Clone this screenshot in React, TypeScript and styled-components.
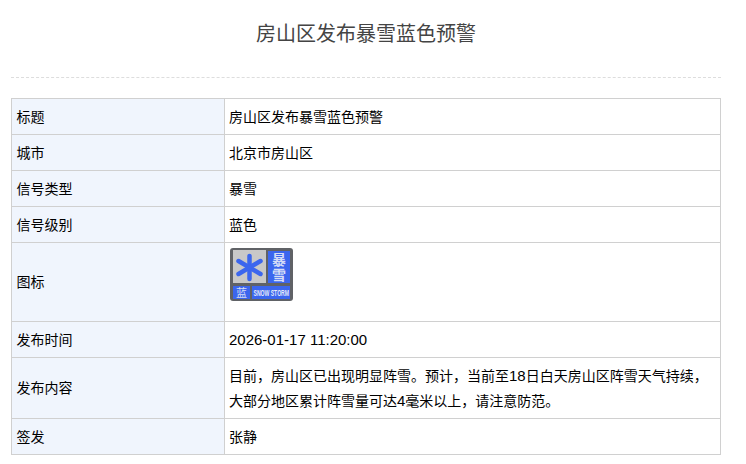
import type { ReactNode } from 'react';
import styled, { createGlobalStyle } from 'styled-components';

const GlobalStyle = createGlobalStyle`
  html, body {
    margin: 0;
    padding: 0;
    background: #fff;
  }
`;

const Page = styled.div`
  width: 710px;
  padding: 0 25px 0 11px;
  font-family: "Noto Sans CJK SC", sans-serif;
  color: #000;
`;

const Header = styled.div`
  height: 77px;
  border-bottom: 1px dashed #ddd;
  margin-bottom: 20px;
  text-align: center;
`;

const Title = styled.h1`
  margin: 0;
  padding-top: 19px;
  font-size: 20px;
  line-height: 27px;
  font-weight: 400;
  color: #444;
`;

const Table = styled.table`
  width: 710px;
  border-collapse: collapse;
  table-layout: fixed;
  font-size: 14px;
`;

const Row = styled.tr<{ $height: number }>`
  height: ${(p) => p.$height}px;
`;

const Label = styled.td`
  width: 213px;
  box-sizing: border-box;
  padding: 0 5px 2px 4.5px;
  background: #f0f5fd;
  border: 1px solid #d0d0d0;
`;

const Value = styled.td`
  padding: 0 5px 0 4px;
  border: 1px solid #d0d0d0;
  line-height: 25px;
`;

const IconCell = styled.td`
  padding: 5px 5px 0;
  border: 1px solid #d0d0d0;
  vertical-align: top;
`;

const Latin = styled.span`
  font-family: "Liberation Sans", sans-serif;
  font-size: 15px;
`;

const IconWrap = styled.div`
  display: flex;
  height: 53px;
`;

function SnowStormIcon() {
  const blue = '#3b66ee';
  const glyph = '#d6def6';
  return (
    <svg width="63" height="53" viewBox="0 0 63 53">
      <rect x="0" y="0" width="63" height="53" rx="3" fill="#606266" />
      <rect x="3" y="2" width="33" height="33" fill="#c8c8c8" />
      <rect x="38" y="3" width="22" height="32" fill={blue} />
      <rect x="3" y="38" width="17" height="13" fill={blue} />
      <rect x="22" y="38" width="38" height="13" fill={blue} />
      <g stroke={blue} strokeWidth="4.5" strokeLinecap="round">
        <line x1="19.5" y1="8" x2="19.5" y2="31" />
        <line x1="8.5" y1="13" x2="30.5" y2="26" />
        <line x1="30.5" y1="13" x2="8.5" y2="26" />
      </g>
      <text x="49" y="17" textAnchor="middle" fontSize="14" fontWeight="700" fill={glyph}>暴</text>
      <text x="49" y="32" textAnchor="middle" fontSize="14" fontWeight="700" fill={glyph}>雪</text>
      <text x="11.5" y="48.5" textAnchor="middle" fontSize="11" fill={glyph}>蓝</text>
      <text
        x="23.5"
        y="47.5"
        textLength="35.5"
        lengthAdjust="spacingAndGlyphs"
        fontSize="8.5"
        fontWeight="700"
        fill="#e6eaf9"
        fontFamily="Liberation Sans, sans-serif"
      >
        SNOW STORM
      </text>
    </svg>
  );
}

const rows: { label: string; height: number; value: ReactNode }[] = [
  { label: '标题', height: 36, value: '房山区发布暴雪蓝色预警' },
  { label: '城市', height: 36, value: '北京市房山区' },
  { label: '信号类型', height: 36, value: '暴雪' },
  { label: '信号级别', height: 36, value: '蓝色' },
  { label: '发布时间', height: 36, value: <Latin>2026-01-17 11:20:00</Latin> },
  {
    label: '发布内容',
    height: 61,
    value: (
      <>
        目前，房山区已出现明显阵雪。预计，当前至<Latin>18</Latin>日白天房山区阵雪天气持续，大部分地区累计阵雪量可达
        <Latin>4</Latin>毫米以上，请注意防范。
      </>
    ),
  },
  { label: '签发', height: 36, value: '张静' },
];

export default function App() {
  return (
    <Page>
      <GlobalStyle />
      <Header>
        <Title>房山区发布暴雪蓝色预警</Title>
      </Header>
      <Table>
        <tbody>
          {rows.slice(0, 4).map((row) => (
            <Row key={row.label} $height={row.height}>
              <Label>{row.label}</Label>
              <Value>{row.value}</Value>
            </Row>
          ))}
          <Row $height={79}>
            <Label>图标</Label>
            <IconCell>
              <IconWrap>
                <SnowStormIcon />
              </IconWrap>
            </IconCell>
          </Row>
          {rows.slice(4).map((row) => (
            <Row key={row.label} $height={row.height}>
              <Label>{row.label}</Label>
              <Value>{row.value}</Value>
            </Row>
          ))}
        </tbody>
      </Table>
    </Page>
  );
}
